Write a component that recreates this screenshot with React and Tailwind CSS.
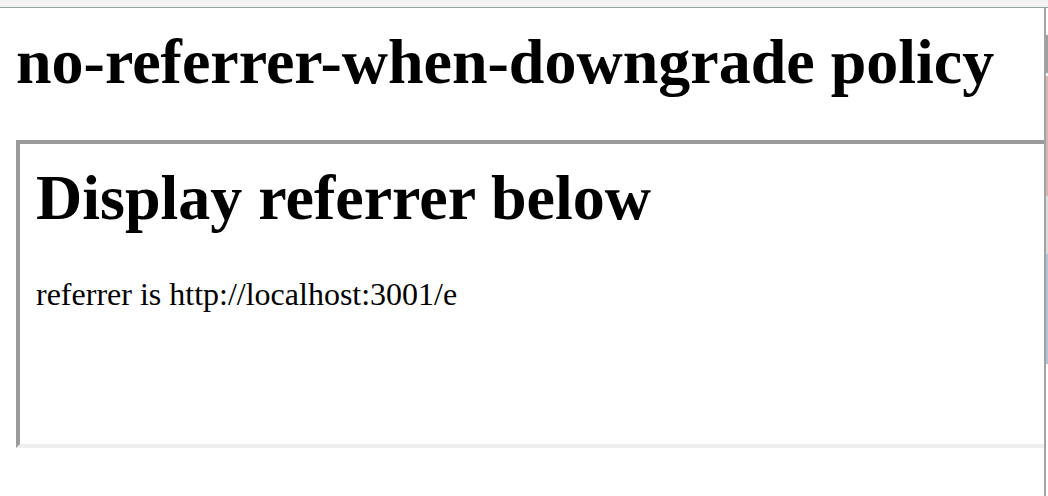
export default function App() {
  return (
    <div className="w-[1048px] h-[496px] overflow-hidden bg-white flex flex-col" style={{ fontFamily: '"Liberation Serif", "Times New Roman", serif' }}>
      <div className="h-[8px] shrink-0 bg-[#f3f3f3] border-b border-[#9aa3a3]" />
      <div className="flex flex-1 min-h-0">
        <div className="w-[1044px] shrink-0 overflow-hidden bg-white">
          <h1 className="ml-[16px] mt-[17px] mb-[41px] text-[64px] leading-[74px] font-bold text-black whitespace-nowrap">
            no-referrer-when-downgrade policy
          </h1>
          <div className="ml-[16px] w-[1208px] h-[308px] border-4 border-t-[#9a9a9a] border-l-[#9a9a9a] border-b-[#eeeeee] border-r-[#eeeeee] bg-white">
            <h2 className="ml-[16px] mt-[17px] text-[64px] leading-[74px] font-bold text-black whitespace-nowrap">
              Display referrer below
            </h2>
            <p className="ml-[16px] mt-[41px] text-[32px] leading-[36px] text-black whitespace-nowrap">
              referrer is http://localhost:3001/e
            </p>
          </div>
        </div>
        <div className="w-[2px] shrink-0 bg-[#a3a3a3]" />
        <div className="w-[2px] shrink-0 flex flex-col">
          <div className="h-[27px] bg-white" />
          <div className="h-[38px] bg-[#a0a0a0]" />
          <div className="h-[3px] bg-white" />
          <div className="h-[120px] bg-[#d8b4b4]" />
          <div className="h-[58px] bg-[#dddddd]" />
          <div className="h-[110px] bg-[#b4c4d8]" />
          <div className="flex-1 bg-white" />
        </div>
      </div>
    </div>
  );
}
